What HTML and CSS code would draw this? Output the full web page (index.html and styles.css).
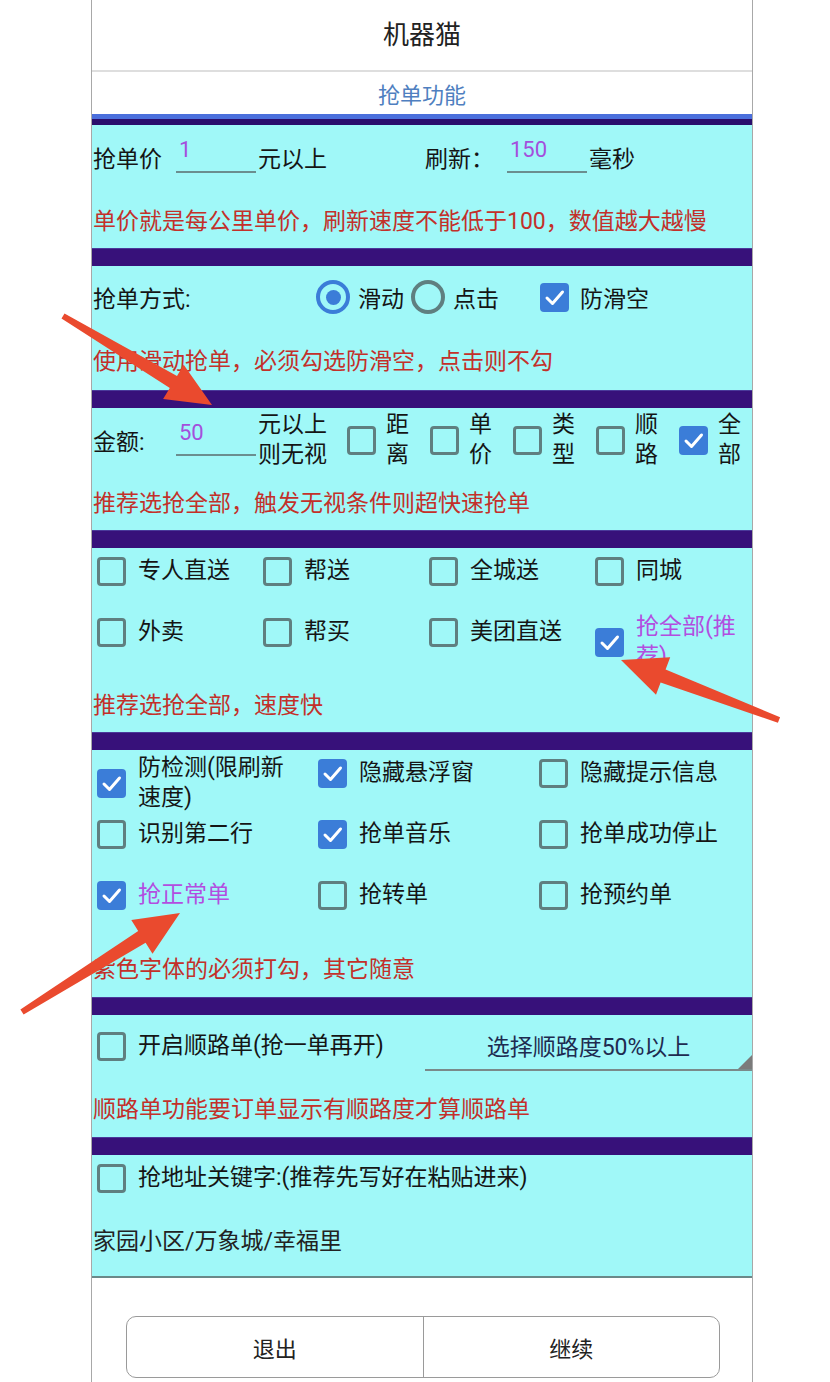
FILE: index.html
```html
<!DOCTYPE html>
<html lang="zh-CN">
<head>
<meta charset="utf-8">
<title>机器猫</title>
<link rel="stylesheet" href="styles.css">
</head>
<body>
<div class="dialog">
  <div class="title">机器猫</div>
  <div class="subtitle">抢单功能</div>
  <div class="bar-blue"></div>
  <div class="bar-dark"></div>

  <section class="sec s1">
    <div class="row r1">
      <span class="lbl-price">抢单价</span>
      <span class="field">1</span>
      <span class="after">元以上</span>
      <span class="lbl-refresh">刷新：</span>
      <span class="field">150</span>
      <span class="after">毫秒</span>
    </div>
    <div class="note n1">单价就是每公里单价，刷新速度不能低于100，数值越大越慢</div>
  </section>
  <div class="sep"></div>

  <section class="sec s2">
    <div class="row r2">
      <span class="lbl-mode">抢单方式:</span>
      <span class="radio on"></span><span class="rtext">滑动</span>
      <span class="radio"></span><span class="rtext">点击</span>
      <span class="cb on cb-anti"><svg viewBox="0 0 29 29"><path d="M7 15 L12.5 20.5 L22.5 9"/></svg></span>
      <span class="cbtext">防滑空</span>
    </div>
    <div class="note n2">使用滑动抢单，必须勾选防滑空，点击则不勾</div>
  </section>
  <div class="sep"></div>

  <section class="sec s3">
    <div class="row r3">
      <span class="lbl-amount">金额:</span>
      <span class="field">50</span>
      <span class="twoline after">元以上<br>则无视</span>
      <div class="vitems">
        <div class="vitem"><span class="cb"></span><span class="twoline">距<br>离</span></div>
        <div class="vitem"><span class="cb"></span><span class="twoline">单<br>价</span></div>
        <div class="vitem"><span class="cb"></span><span class="twoline">类<br>型</span></div>
        <div class="vitem"><span class="cb"></span><span class="twoline">顺<br>路</span></div>
        <div class="vitem"><span class="cb on"><svg viewBox="0 0 29 29"><path d="M7 15 L12.5 20.5 L22.5 9"/></svg></span><span class="twoline">全<br>部</span></div>
      </div>
    </div>
    <div class="note n3">推荐选抢全部，触发无视条件则超快速抢单</div>
  </section>
  <div class="sep"></div>

  <section class="sec s4">
    <div class="grid g4">
      <div class="item"><span class="cb"></span><span class="t">专人直送</span></div>
      <div class="item"><span class="cb"></span><span class="t">帮送</span></div>
      <div class="item"><span class="cb"></span><span class="t">全城送</span></div>
      <div class="item"><span class="cb"></span><span class="t">同城</span></div>
      <div class="item"><span class="cb"></span><span class="t">外卖</span></div>
      <div class="item"><span class="cb"></span><span class="t">帮买</span></div>
      <div class="item"><span class="cb"></span><span class="t">美团直送</span></div>
      <div class="item"><span class="cb on"><svg viewBox="0 0 29 29"><path d="M7 15 L12.5 20.5 L22.5 9"/></svg></span><span class="t purple">抢全部(推<br>荐)</span></div>
    </div>
    <div class="note n4">推荐选抢全部，速度快</div>
  </section>
  <div class="sep"></div>

  <section class="sec s5">
    <div class="grid g3">
      <div class="item"><span class="cb on"><svg viewBox="0 0 29 29"><path d="M7 15 L12.5 20.5 L22.5 9"/></svg></span><span class="t">防检测(限刷新<br>速度)</span></div>
      <div class="item"><span class="cb on"><svg viewBox="0 0 29 29"><path d="M7 15 L12.5 20.5 L22.5 9"/></svg></span><span class="t">隐藏悬浮窗</span></div>
      <div class="item"><span class="cb"></span><span class="t">隐藏提示信息</span></div>
      <div class="item"><span class="cb"></span><span class="t">识别第二行</span></div>
      <div class="item"><span class="cb on"><svg viewBox="0 0 29 29"><path d="M7 15 L12.5 20.5 L22.5 9"/></svg></span><span class="t">抢单音乐</span></div>
      <div class="item"><span class="cb"></span><span class="t">抢单成功停止</span></div>
      <div class="item"><span class="cb on"><svg viewBox="0 0 29 29"><path d="M7 15 L12.5 20.5 L22.5 9"/></svg></span><span class="t purple">抢正常单</span></div>
      <div class="item"><span class="cb"></span><span class="t">抢转单</span></div>
      <div class="item"><span class="cb"></span><span class="t">抢预约单</span></div>
    </div>
    <div class="note n5">紫色字体的必须打勾，其它随意</div>
  </section>
  <div class="sep"></div>

  <section class="sec s6">
    <div class="row r6">
      <div class="item"><span class="cb"></span><span class="t">开启顺路单(抢一单再开)</span></div>
      <div class="spinner"><span>选择顺路度50%以上</span><span class="tri"></span></div>
    </div>
    <div class="note n6">顺路单功能要订单显示有顺路度才算顺路单</div>
  </section>
  <div class="sep"></div>

  <section class="sec s7">
    <div class="row r7">
      <div class="item"><span class="cb"></span><span class="t">抢地址关键字:(推荐先写好在粘贴进来)</span></div>
    </div>
    <div class="edit">家园小区/万象城/幸福里</div>
  </section>

  <div class="footer">
    <div class="btns">
      <div class="btn">退出</div>
      <div class="btn">继续</div>
    </div>
  </div>
</div>

<svg class="arrows" width="830" height="1382" viewBox="0 0 830 1382">
  <polygon points="64.5,313.4 177,375.9 183.7,364.7 212,405 163.1,399.1 169.8,387.9 61.5,318.6"/>
  <polygon points="780.1,717.2 665.6,669.5 670.2,657.3 621,660 656,694.7 660.6,682.5 777.9,722.8"/>
  <polygon points="20.4,1009.5 138.2,931 131.3,920 180,913 152.5,953.8 145.6,942.8 23.6,1014.5"/>
</svg>
</body>
</html>
```

FILE: styles.css
```css
* { box-sizing: border-box; }

html, body {
  margin: 0;
  padding: 0;
  background: #ffffff;
}

body {
  position: relative;
  width: 830px;
  height: 1382px;
  overflow: hidden;
  font-family: Roboto, "Noto Sans CJK SC", sans-serif;
  font-size: 23px;
  color: #151515;
}

.dialog {
  margin-left: 91px;
  width: 662px;
  border-left: 1px solid #a8a8a8;
  border-right: 1px solid #a8a8a8;
  background: #ffffff;
}

.title {
  height: 72px;
  line-height: 70px;
  text-align: center;
  font-size: 26px;
  color: #222;
  border-bottom: 2px solid #dedede;
}

.subtitle {
  height: 42px;
  padding-top: 6px;
  line-height: 36px;
  text-align: center;
  font-size: 22px;
  color: #4f7fc0;
}

.bar-blue { height: 5px; background: #4b6fdc; }
.bar-dark { height: 6px; background: #2a0e6c; }

.sep {
  height: 18px;
  background: #37117a;
  border-top: 1px solid #4a3a9a;
}

.sec {
  background: #a0f8f8;
}

.row {
  display: flex;
  align-items: center;
}
.row > * { flex: none; }

.note {
  display: flex;
  align-items: center;
  padding-left: 1px;
  color: #c3302a;
  white-space: nowrap;
}

/* section 1 */
.r1 { height: 64px; padding-left: 1px; }
.n1 { height: 59px; }
.field {
  align-self: flex-end;
  margin-bottom: 16px;
  width: 80px;
  height: 36px;
  padding-left: 3px;
  line-height: 26px;
  font-size: 22px;
  color: #a44fdc;
  border-bottom: 2px solid #6b8e8f;
}
.lbl-price { width: 83px; }
.after { margin-left: 2px; white-space: nowrap; }
.lbl-refresh { margin-left: 98px; width: 82px; }

/* section 2 */
.r2 { height: 62px; padding-left: 1px; }
.n2 { height: 62px; }
.lbl-mode { width: 223px; }
.radio {
  width: 34px;
  height: 34px;
  border-radius: 50%;
  border: 4px solid #5f7f80;
  display: flex;
  align-items: center;
  justify-content: center;
}
.radio.on { border-color: #3b7dd8; }
.radio.on::after {
  content: "";
  width: 15px;
  height: 15px;
  border-radius: 50%;
  background: #3b7dd8;
}
.rtext { margin-left: 8px; margin-right: 7px; }
.cb-anti { margin-left: 34px; }
.cbtext { margin-left: 11px; }

/* checkboxes */
.cb {
  flex: none;
  width: 29px;
  height: 29px;
  border: 3px solid #5f7f80;
  border-radius: 4px;
  display: inline-block;
}
.cb.on {
  border: none;
  background: #3b7dd8;
}
.cb svg {
  display: block;
  width: 29px;
  height: 29px;
}
.cb svg path {
  fill: none;
  stroke: #ffffff;
  stroke-width: 3;
  stroke-linecap: round;
  stroke-linejoin: round;
}

/* section 3 */
.r3 { height: 64px; padding-left: 1px; }
.n3 { height: 58px; }
.lbl-amount { width: 83px; }
.twoline { line-height: 30px; white-space: nowrap; }
.vitems {
  display: flex;
  align-items: center;
  margin-left: 20px;
}
.vitem {
  display: flex;
  align-items: center;
  width: 83px;
}
.vitem .twoline { margin-left: 10px; }

/* grids */
.grid {
  display: grid;
  grid-auto-rows: 61px;
  padding-left: 5px;
  padding-top: 3px;
  align-items: start;
}
.g4 { grid-template-columns: 166px 166px 166px 1fr; }
.g3 { grid-template-columns: 221px 221px 1fr; }

.item {
  display: flex;
  align-items: center;
  min-height: 40px;
}
.item .t {
  margin-left: 12px;
  line-height: 30px;
  white-space: nowrap;
}
.purple { color: #b24ee0; }

.n4 { height: 59px; }
.n5 { height: 61px; }

/* section 6 */
.r6 { height: 62px; padding-left: 5px; }
.spinner {
  position: relative;
  align-self: flex-end;
  margin-left: auto;
  margin-bottom: 6px;
  width: 327px;
  height: 50px;
  display: flex;
  align-items: center;
  justify-content: center;
  color: #1e2b50;
  border-bottom: 2px solid #7a8a8a;
}
.tri {
  position: absolute;
  right: 0;
  bottom: 0;
  width: 0;
  height: 0;
  border-left: 14px solid transparent;
  border-bottom: 14px solid #7b7b7b;
}
.n6 { height: 60px; }

/* section 7 */
.r7 { height: 46px; padding-left: 5px; }
.edit {
  height: 77px;
  padding-left: 1px;
  display: flex;
  align-items: center;
  color: #222;
  border-bottom: 2px solid #6a8989;
  margin-bottom: 19px;
}

/* footer */
.footer {
  height: 85px;
  padding: 19px 32px 0 34px;
  background: #ffffff;
}
.btns {
  display: flex;
  height: 62px;
  border: 1.5px solid #9a9a9a;
  border-radius: 10px;
  overflow: hidden;
}
.btn {
  flex: 1;
  display: flex;
  align-items: center;
  justify-content: center;
  font-size: 22px;
  color: #222;
}
.btn + .btn { border-left: 1.5px solid #9a9a9a; }

/* annotation arrows */
.arrows {
  position: absolute;
  left: 0;
  top: 0;
  pointer-events: none;
}
.arrows polygon { fill: #ea4a2e; }
```
